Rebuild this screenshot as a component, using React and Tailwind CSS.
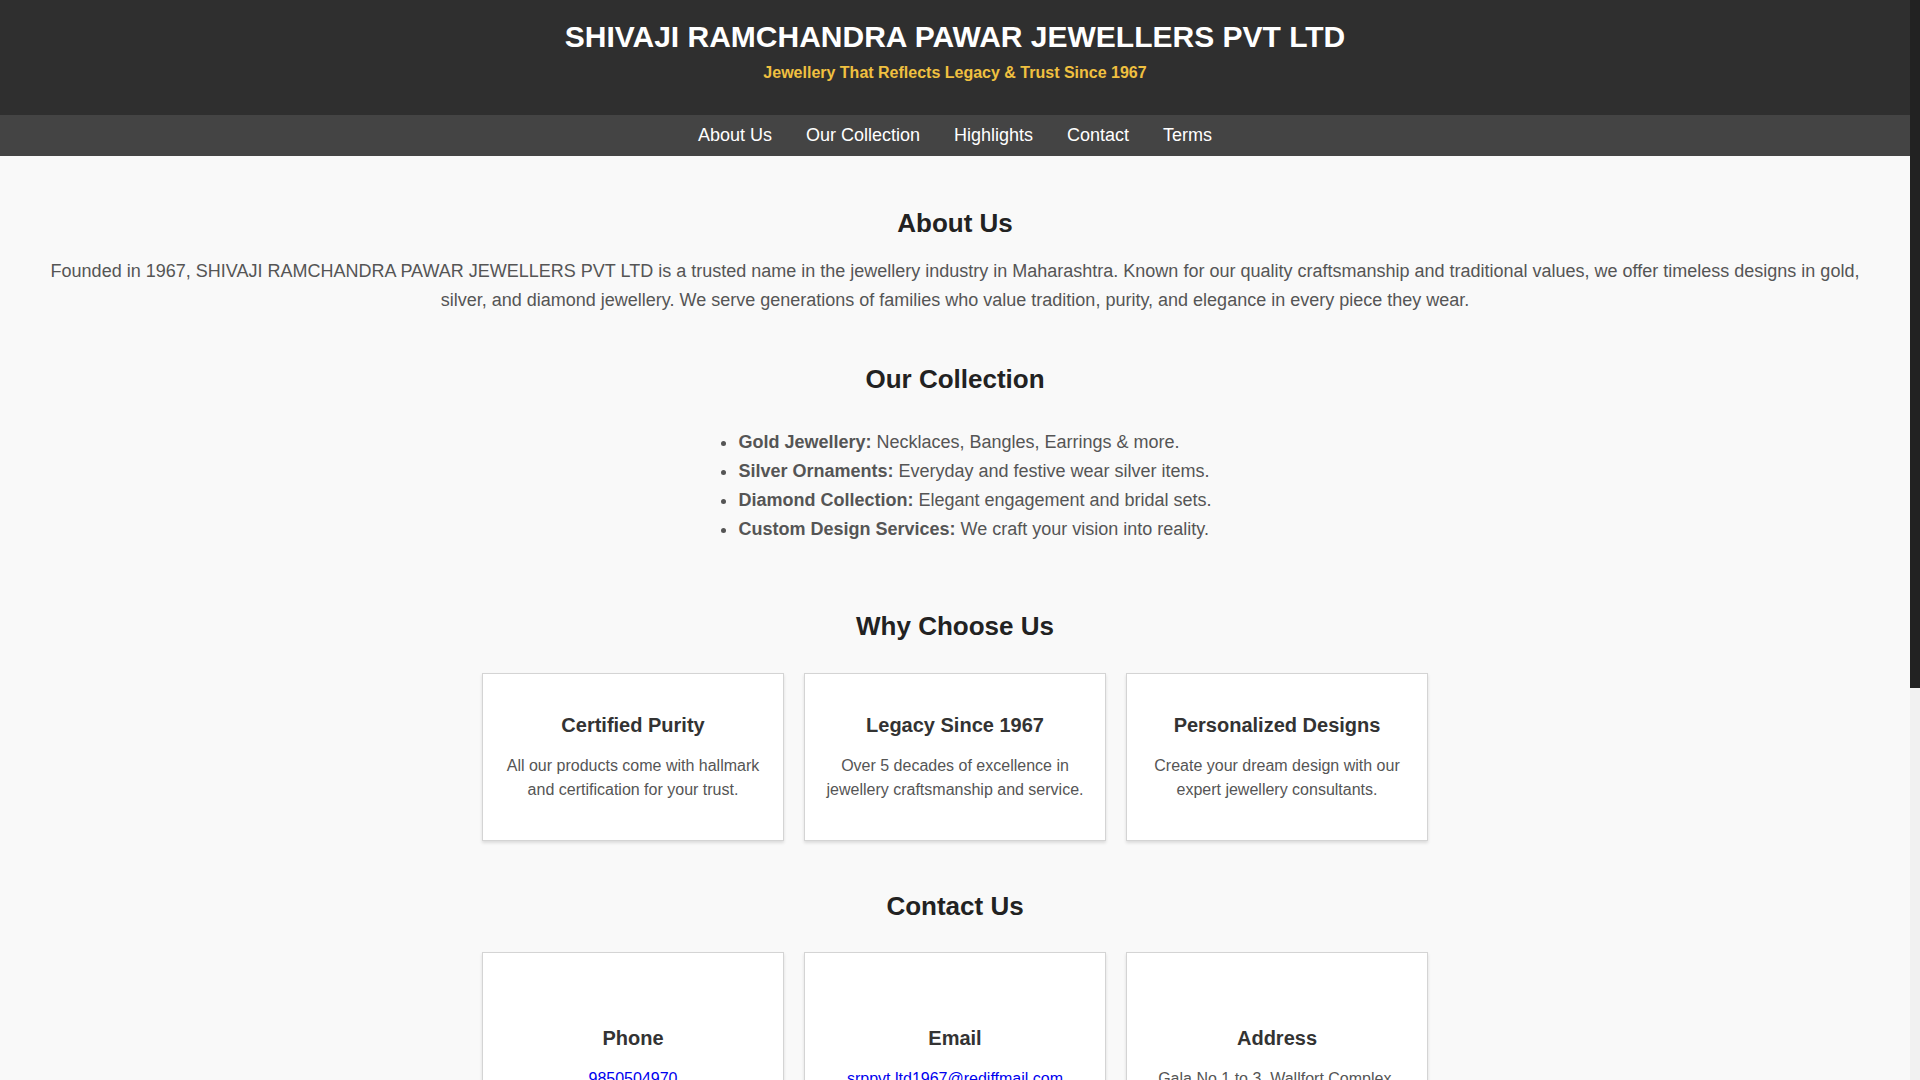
import React from "react"

const navLinks = ["About Us", "Our Collection", "Highlights", "Contact", "Terms"]

const collection = [
    { name: "Gold Jewellery:", text: "Necklaces, Bangles, Earrings & more." },
    { name: "Silver Ornaments:", text: "Everyday and festive wear silver items." },
    { name: "Diamond Collection:", text: "Elegant engagement and bridal sets." },
    { name: "Custom Design Services:", text: "We craft your vision into reality." },
]

const highlights = [
    { title: "Certified Purity", text: "All our products come with hallmark and certification for your trust." },
    { title: "Legacy Since 1967", text: "Over 5 decades of excellence in jewellery craftsmanship and service." },
    { title: "Personalized Designs", text: "Create your dream design with our expert jewellery consultants." },
]

const SectionTitle = ({ children, className = "" }) => (
    <h2 className={`text-center text-[26px] font-bold leading-[normal] text-[#222] ${className}`}>{children}</h2>
)

const Card = ({ children }) => (
    <div className="w-[302px] bg-white border border-[#d4d4d4] shadow-[0_2px_3px_rgba(0,0,0,0.12)] px-5 pt-5 pb-5 text-center">
        {children}
    </div>
)

const CardTitle = ({ children }) => (
    <h3 className="mt-5 mb-[17px] text-[20px] font-bold leading-[normal] text-[#333]">{children}</h3>
)

const App = () => {
    return (
        <div className="flex bg-[#f9f9f9] font-['Liberation_Sans',Arial,sans-serif]">
            <div className="flex-1 min-w-0">
                <header className="bg-[#2f2f2f] text-center pt-[20px] pb-[32.5px]">
                    <h1 className="text-[30px] font-bold leading-[normal] text-white">SHIVAJI RAMCHANDRA PAWAR JEWELLERS PVT LTD</h1>
                    <p className="mt-[10px] text-[16px] font-bold leading-[normal] text-[#f0c040]">Jewellery That Reflects Legacy &amp; Trust Since 1967</p>
                </header>

                <nav className="bg-[#444] py-[10px] flex justify-center gap-[34px]">
                    {navLinks.map((link) => (
                        <a key={link} href={"#" + link} className="text-[18px] leading-[normal] text-white">{link}</a>
                    ))}
                </nav>

                <section className="px-10 pt-[52px]">
                    <SectionTitle className="mb-[18px]">About Us</SectionTitle>
                    <p className="text-center text-[18px] leading-[29.4px] text-[#555]">
                        Founded in 1967, SHIVAJI RAMCHANDRA PAWAR JEWELLERS PVT LTD is a trusted name in the jewellery industry in Maharashtra. Known for our quality craftsmanship and traditional values, we offer timeless designs in gold, silver, and diamond jewellery. We serve generations of families who value tradition, purity, and elegance in every piece they wear.
                    </p>
                </section>

                <section className="px-10 pt-[49px]">
                    <SectionTitle className="mb-[33px]">Our Collection</SectionTitle>
                    <div className="text-center">
                        <ul className="inline-block text-left list-disc pl-10 text-[18px] leading-[29px] text-[#555]">
                            {collection.map((item) => (
                                <li key={item.name}><strong className="font-bold">{item.name}</strong> {item.text}</li>
                            ))}
                        </ul>
                    </div>
                </section>

                <section className="px-10 pt-[66.6px]">
                    <SectionTitle className="mb-[31px]">Why Choose Us</SectionTitle>
                    <div className="flex flex-wrap justify-center gap-5">
                        {highlights.map((h) => (
                            <Card key={h.title}>
                                <CardTitle>{h.title}</CardTitle>
                                <p className="mb-[17px] text-[16px] leading-[24.5px] text-[#555]">{h.text}</p>
                            </Card>
                        ))}
                    </div>
                </section>

                <section className="px-10 pt-[50px] pb-10">
                    <SectionTitle className="mb-[30px]">Contact Us</SectionTitle>
                    <div className="flex flex-wrap justify-center gap-5">
                        <Card>
                            <div className="h-[34px]"></div>
                            <CardTitle>Phone</CardTitle>
                            <p className="mb-[17px] text-[16px] leading-[24.5px]"><a href="tel:9850504970" className="text-[#0000ee] underline">9850504970</a></p>
                        </Card>
                        <Card>
                            <div className="h-[34px]"></div>
                            <CardTitle>Email</CardTitle>
                            <p className="mb-[17px] text-[16px] leading-[24.5px]"><a href="mailto:srppvt.ltd1967@rediffmail.com" className="text-[#0000ee] underline">srppvt.ltd1967@rediffmail.com</a></p>
                        </Card>
                        <Card>
                            <div className="h-[34px]"></div>
                            <CardTitle>Address</CardTitle>
                            <p className="mb-[17px] text-[16px] leading-[24.5px] text-[#555]">Gala No.1 to 3, Wallfort Complex, Maharashtra, India</p>
                        </Card>
                    </div>
                </section>

                <section className="px-10 pt-[51px] pb-[60px]">
                    <SectionTitle className="mb-[18px]">Terms</SectionTitle>
                    <p className="text-center text-[18px] leading-[1.6] text-[#555]">All jewellery is hallmarked as per BIS standards. Prices vary with the daily gold and silver rates.</p>
                </section>

                <footer className="bg-[#2f2f2f] py-5 text-center text-[14px] text-[#ccc]">
                    &copy; 2025 SHIVAJI RAMCHANDRA PAWAR JEWELLERS PVT LTD. All rights reserved.
                </footer>
            </div>

            {/* fake scrollbar, the reference shot shows one */}
            <div className="w-[10px] shrink-0">
                <div className="sticky top-0 h-screen bg-[#f1f1f1] flex flex-col">
                    <div className="h-[688px] bg-[#222]"></div>
                </div>
            </div>
        </div>
    )
}

export default App
